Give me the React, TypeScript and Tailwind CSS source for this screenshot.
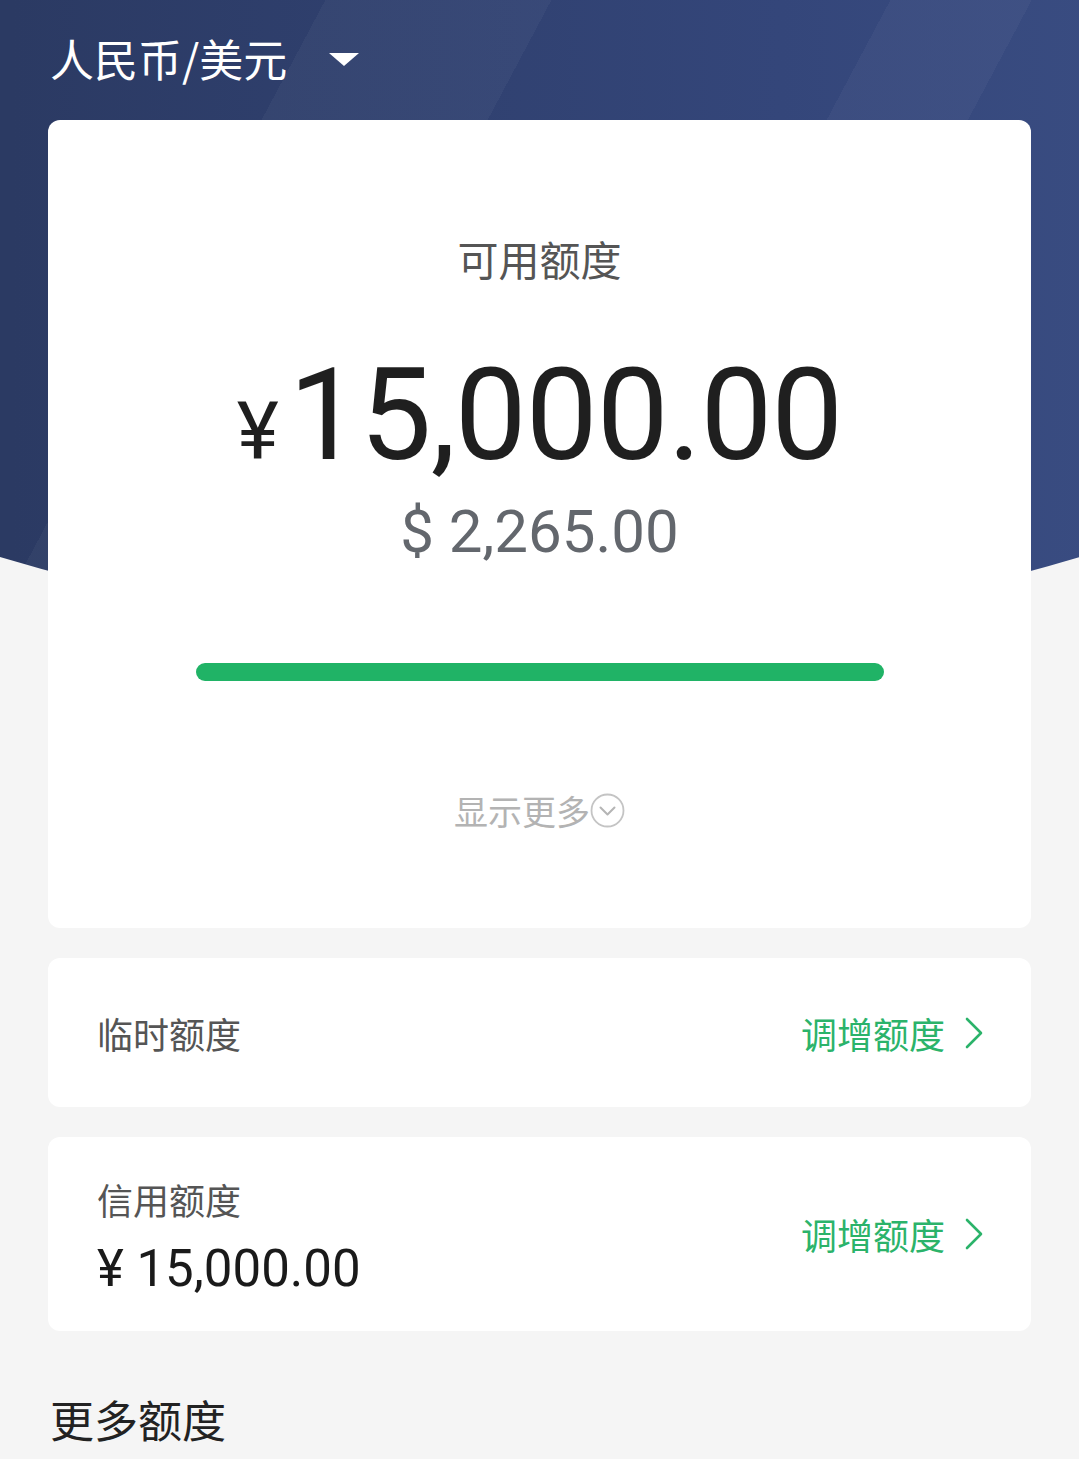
import React from 'react';

const cjk = "font-['Noto_Sans_CJK_SC',sans-serif]";
const num = "font-['Roboto','Noto_Sans_CJK_SC',sans-serif]";

function ChevronRight() {
  return (
    <svg width="22" height="34" viewBox="0 0 22 34" fill="none" className="ml-[18px]">
      <polyline points="4,3 18,17 4,31" stroke="#2bb36a" strokeWidth="2.6" strokeLinecap="round" strokeLinejoin="round" />
    </svg>
  );
}

function ChevronCircle() {
  return (
    <svg width="35" height="35" viewBox="0 0 35 35" fill="none">
      <circle cx="17.5" cy="17.5" r="16" stroke="#c4c4c4" strokeWidth="1.8" />
      <polyline points="10.5,14.5 17.5,21.5 24.5,14.5" stroke="#b5b5b5" strokeWidth="2" strokeLinecap="round" strokeLinejoin="round" />
    </svg>
  );
}

export default function App() {
  return (
    <div className={`relative min-h-[1459px] overflow-hidden bg-[#f5f5f5] ${cjk}`}>
      {/* header backdrop with curved bottom */}
      <div className="absolute left-[-660px] top-[-166px] h-[800px] w-[2400px] rounded-b-[1200px_720px] bg-[linear-gradient(90deg,#2b3a63_28%,#34467a_60%,#43588f_100%)]">
        <div className="absolute inset-0 rounded-b-[1200px_720px] bg-[linear-gradient(118deg,transparent_38%,rgba(255,255,255,0.035)_38%,rgba(255,255,255,0.035)_46%,transparent_46%,transparent_58%,rgba(255,255,255,0.035)_58%,rgba(255,255,255,0.035)_63%,transparent_63%)]" />
      </div>

      <div className="relative px-[48px]">
        <div className="flex h-[120px] items-center pl-[2px] pb-[4px]">
          <span className="text-[44px] leading-none text-white">人民币/美元</span>
          <span className="ml-[42px] mt-[2px] h-0 w-0 border-x-[15px] border-t-[13px] border-x-transparent border-t-white" />
        </div>

        <div className="flex h-[808px] flex-col items-center rounded-[12px] bg-white pt-[118px]">
          <div className="text-[41px] leading-none text-[#555555]">可用额度</div>
          <div className={`mt-[72px] flex items-baseline ${num} text-[#1f1f1f]`}>
            <span className="text-[80px] leading-none">¥</span>
            <span className="ml-[10px] text-[128px] leading-none tracking-[-1px]">15,000.00</span>
          </div>
          <div className={`mt-[23px] ${num} text-[60px] leading-none text-[#63676d]`}>$ 2,265.00</div>
          <div className="mt-[101px] h-[18px] w-[688px] rounded-full bg-[#20b366]" />
          <div className="mt-[112px] flex items-center">
            <span className="text-[34px] leading-none text-[#b3b3b3]">显示更多</span>
            <ChevronCircle />
          </div>
        </div>

        <div className="mt-[30px] flex h-[149px] items-center justify-between rounded-[12px] bg-white pl-[49px] pr-[46px]">
          <span className="text-[36px] leading-none text-[#555555]">临时额度</span>
          <span className="flex items-center text-[36px] leading-none text-[#2bb36a]">
            调增额度
            <ChevronRight />
          </span>
        </div>

        <div className="mt-[30px] flex h-[194px] items-center justify-between rounded-[12px] bg-white pl-[49px] pr-[46px]">
          <div className="flex flex-col pt-[6px]">
            <span className="text-[36px] leading-none text-[#555555]">信用额度</span>
            <span className={`mt-[26px] ${num} text-[51px] leading-none text-[#1a1a1a]`}>¥ 15,000.00</span>
          </div>
          <span className="flex items-center text-[36px] leading-none text-[#2bb36a]">
            调增额度
            <ChevronRight />
          </span>
        </div>

        <h2 className="mt-[66px] pl-[2px] text-[44px] font-normal leading-none text-[#222222]">更多额度</h2>
      </div>
    </div>
  );
}
